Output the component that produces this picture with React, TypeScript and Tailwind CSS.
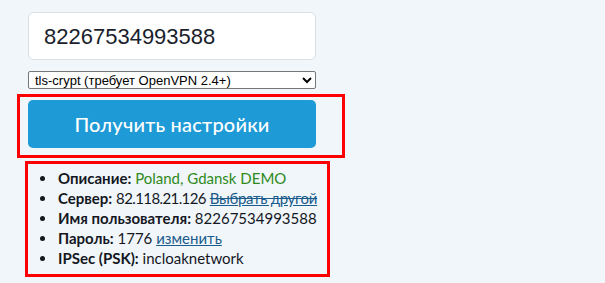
import React from "react";

const rows: { label: string; value: React.ReactNode }[] = [
  {
    label: "Описание:",
    value: <span className="text-[#2f8a1c]">Poland, Gdansk DEMO</span>,
  },
  {
    label: "Сервер:",
    value: (
      <>
        <span className="tracking-[-0.6px]">82.118.21.126</span>{" "}
        <a className="text-[#1c5c8c] [text-decoration-line:underline_line-through] decoration-[#1c5c8c] tracking-[-0.3px]">Выбрать другой</a>
      </>
    ),
  },
  { label: "Имя пользователя:", value: "82267534993588" },
  {
    label: "Пароль:",
    value: (
      <>
        1776 <a className="text-[#1c5c8c] underline">изменить</a>
      </>
    ),
  },
  { label: "IPSec (PSK):", value: "incloaknetwork" },
];

export default function App() {
  return (
    <div className="w-[605px] h-[283px] bg-[#f0f6fa] pt-[12px] overflow-hidden">
      <div className="ml-[28px] w-[288px] h-[48px] bg-white border border-[#dcdfe2] rounded-[6px] flex items-center px-[15px] text-[22px] text-[#1b1e2c] font-['Liberation_Sans',sans-serif]">
        82267534993588
      </div>
      <select
        className="block mt-[11px] ml-[28px] w-[288px] h-[18px] text-[13px] leading-[16px] font-['Liberation_Sans',sans-serif] bg-white border border-[#767676] rounded-[2px] text-black px-[2px]"
        defaultValue="tls-crypt"
      >
        <option value="tls-crypt">tls-crypt (требует OpenVPN 2.4+)</option>
      </select>
      <div className="mt-[5px] ml-[17px] w-[328px] h-[64px] border-[3px] border-[#ff0000] pt-[3px] pl-[8px]">
        <button className="w-[288px] h-[48px] bg-[#1e9ad6] rounded-[5px] text-white text-[20px] font-medium font-['Lato',sans-serif] tracking-[0.2px]">
          Получить настройки
        </button>
      </div>
      <div className="mt-[3px] ml-[25px] w-[305px] h-[116px] border-[3px] border-[#ff0000] pt-[4px]">
        <ul className="font-['Lato',sans-serif] text-[15px] leading-[20px] text-[#15171f]">
          {rows.map((r) => (
            <li key={r.label} className="flex items-center whitespace-nowrap">
              <span className="ml-[12px] mr-[13px] w-[5px] h-[5px] rounded-full bg-[#15171f] shrink-0" />
              <span>
                <b className="font-bold">{r.label}</b> {r.value}
              </span>
            </li>
          ))}
        </ul>
      </div>
    </div>
  );
}
